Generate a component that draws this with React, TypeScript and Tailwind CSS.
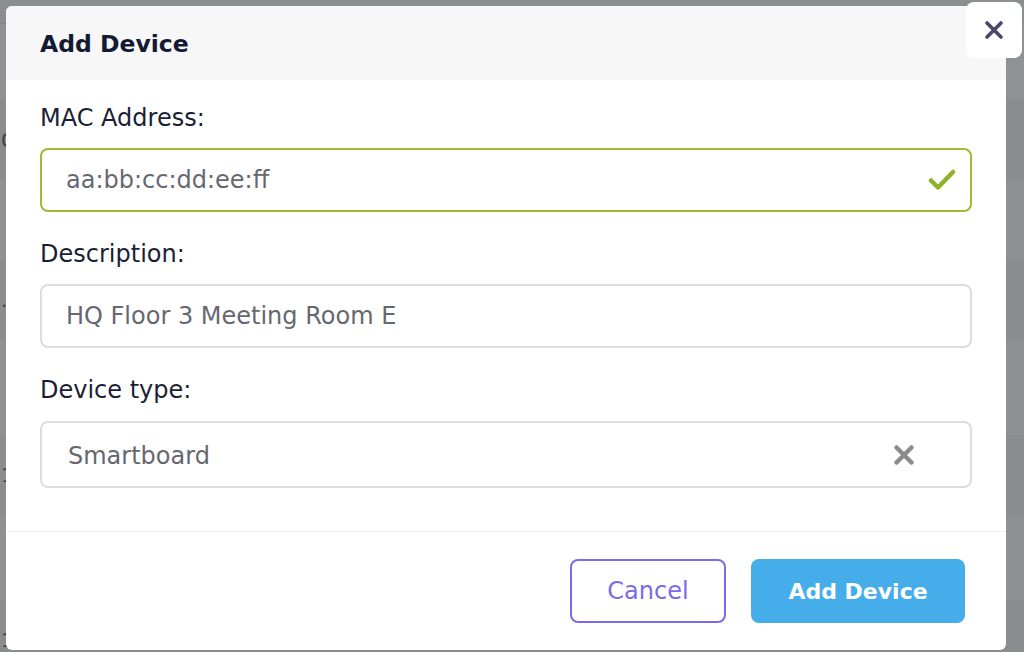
import React from "react";

// faint page behind the overlay: row height, shade, first glyph peeking out
const rows = [
  { h: "h-[24px]", c: "bg-[#8b8f8f] border-b border-[#7f8383]", t: "" },
  { h: "h-[76px]", c: "bg-[#8e9292]", t: "" },
  { h: "h-[80px]", c: "bg-[#898d8d]", t: "0" },
  { h: "h-[80px]", c: "bg-[#8d9191]", t: "" },
  { h: "h-[80px]", c: "bg-[#898d8d]", t: "." },
  { h: "h-[95px]", c: "bg-[#8d9191]", t: "" },
  { h: "h-[80px]", c: "bg-[#898d8d]", t: "1" },
  { h: "h-[85px]", c: "bg-[#8d9191]", t: "" },
  { h: "h-[80px]", c: "bg-[#898d8d]", t: "1" },
];

const App = () => {
  return (
    <div className="relative h-[652px] w-[1024px] overflow-hidden bg-[#8b8f8f] font-['DejaVu_Sans',sans-serif]">
      <div className="flex flex-col">
        {rows.map((r, i) => (
          <div key={i} className={`flex items-center text-[20px] leading-none text-[#3a3e48] ${r.h} ${r.c}`}>
            {r.t && <span className="pl-[1px]">{r.t}</span>}
          </div>
        ))}
      </div>

      {/* modal */}
      <div className="absolute left-[6px] top-[6px] flex h-[644px] w-[1000px] flex-col overflow-hidden rounded-[6px] bg-white">
        <div className="flex h-[74px] shrink-0 items-center bg-[#f7f7f8] px-[34px] pt-[3px]">
          <h2 className="text-[23.5px] font-semibold text-[#141a33]">Add Device</h2>
        </div>

        <div className="flex flex-col px-[34px] pt-[23px]">
          <label className="h-[30px] text-[24px] leading-[30px] text-[#1a1f36]">MAC Address:</label>
          <div className="mt-[15px] flex h-[64px] items-center justify-between rounded-[8px] border-2 border-[#a3b935] pl-[24px] pr-[14px]">
            <span className="text-[24px] text-[#666870]">aa:bb:cc:dd:ee:ff</span>
            <svg width="28" height="24" viewBox="0 0 28 24" fill="none">
              <path
                d="M3 12.5 L10 19.5 L25 4"
                stroke="#92b02a"
                strokeWidth="4.5"
                strokeLinecap="round"
                strokeLinejoin="round"
              />
            </svg>
          </div>

          <label className="mt-[27px] h-[30px] text-[24px] leading-[30px] text-[#1a1f36]">Description:</label>
          <div className="mt-[15px] flex h-[64px] items-center rounded-[8px] border-2 border-[#dcdce4] pl-[24px]">
            <span className="text-[24px] text-[#666870]">HQ Floor 3 Meeting Room E</span>
          </div>

          <label className="mt-[27px] h-[30px] text-[24px] leading-[30px] text-[#1a1f36]">Device type:</label>
          <div className="mt-[16px] flex h-[67px] items-center justify-between rounded-[8px] border-2 border-[#dcdce4] pl-[26px] pr-[55px]">
            <span className="pt-[3px] text-[24px] text-[#666870]">Smartboard</span>
            <svg width="22" height="22" viewBox="0 0 22 22" fill="none">
              <path
                d="M3.5 3.5 L18.5 18.5 M18.5 3.5 L3.5 18.5"
                stroke="#8c8c8c"
                strokeWidth="4.5"
                strokeLinecap="round"
              />
            </svg>
          </div>
        </div>

        <div className="mt-[43px] flex flex-1 items-start justify-end gap-[25px] border-t border-[#efeff2] pr-[41px] pt-[27px]">
          <button className="h-[64px] w-[156px] rounded-[8px] border-2 border-[#7c6be4] text-[24px] font-medium text-[#7c6be4]">
            Cancel
          </button>
          <button className="h-[64px] w-[214px] rounded-[8px] bg-[#45ade9] text-[22px] font-semibold text-white">
            Add Device
          </button>
        </div>
      </div>

      {/* close button */}
      <button className="absolute left-[966px] top-[2px] flex h-[56px] w-[56px] items-center justify-center rounded-[8px] bg-white">
        <svg width="20" height="20" viewBox="0 0 20 20" fill="none">
          <path
            d="M3 3 L17 17 M17 3 L3 17"
            stroke="#4b4668"
            strokeWidth="3.6"
            strokeLinecap="round"
          />
        </svg>
      </button>
    </div>
  );
};

export default App;
